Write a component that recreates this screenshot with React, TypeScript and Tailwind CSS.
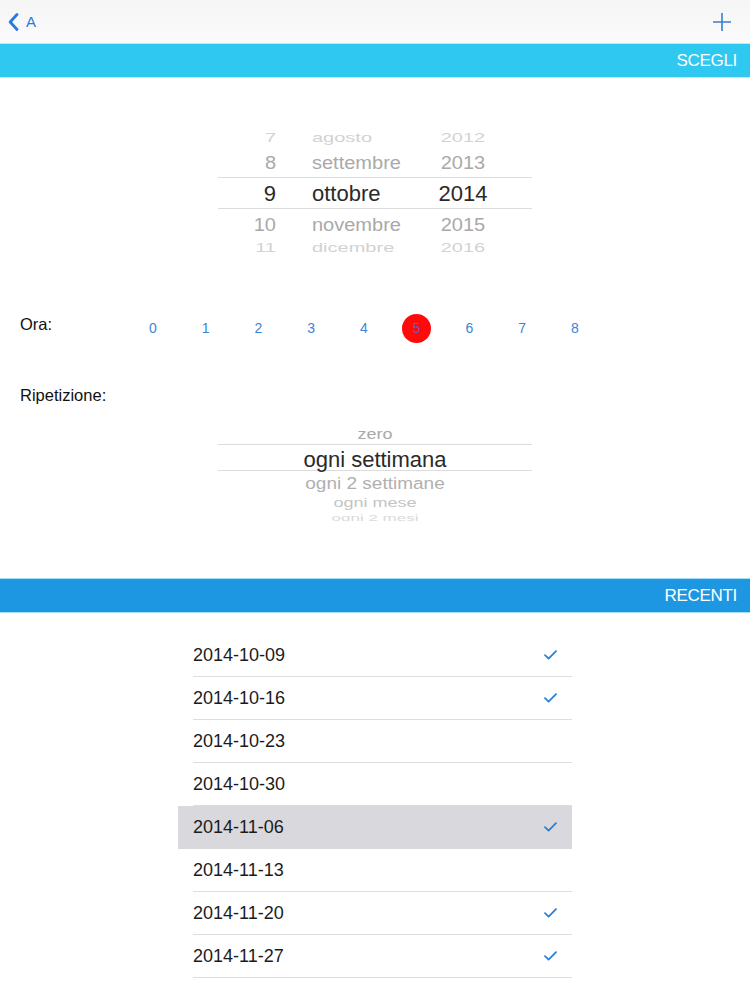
const FONT = { fontFamily: '"Liberation Sans", Arial, sans-serif' }

const DATE_ROWS = [
  { d: '7', m: 'agosto', y: '2012', h: 'h-[23px]', text: 'text-[20px] text-[#d2d2d2] scale-y-[0.62]' },
  { d: '8', m: 'settembre', y: '2013', h: 'h-[28px]', text: 'text-[20px] text-[#a9a9a9] scale-y-[0.88]' },
  { d: '9', m: 'ottobre', y: '2014', h: 'h-[32px] border-y border-[#dcdcdc]', text: 'text-[22px] text-[#2a2a2a]' },
  { d: '10', m: 'novembre', y: '2015', h: 'h-[31px]', text: 'text-[20px] text-[#a9a9a9] scale-y-[0.88]' },
  { d: '11', m: 'dicembre', y: '2016', h: 'h-[16px]', text: 'text-[20px] text-[#d2d2d2] scale-y-[0.62]' },
]

const REPEAT_ROWS = [
  { label: 'zero', h: 'h-[20px]', text: 'text-[18px] text-[#a9a9a9] scale-y-[0.85]' },
  { label: 'ogni settimana', h: 'h-[27px] border-y border-[#dcdcdc] pt-[4px]', text: 'text-[22px] text-[#2a2a2a]' },
  { label: 'ogni 2 settimane', h: 'h-[24px]', text: 'text-[19px] text-[#b0b0b0] scale-y-[0.9]' },
  { label: 'ogni mese', h: 'h-[16px]', text: 'text-[18px] text-[#c4c4c4] scale-y-[0.72]' },
  { label: 'ogni 2 mesi', h: 'h-[14px]', text: 'text-[17px] text-[#dadada] scale-y-[0.5]' },
]

const HOURS = [0, 1, 2, 3, 4, 5, 6, 7, 8]

const RECENT = [
  { date: '2014-10-09', done: true },
  { date: '2014-10-16', done: true },
  { date: '2014-10-23', done: false },
  { date: '2014-10-30', done: false },
  { date: '2014-11-06', done: true, selected: true },
  { date: '2014-11-13', done: false },
  { date: '2014-11-20', done: true },
  { date: '2014-11-27', done: true },
]

function SectionBar({ title, tone }: { title: string; tone: 'cyan' | 'blue' }) {
  const cls =
    tone === 'cyan'
      ? 'bg-[#2ec8f0] border-[#b5ecfb]'
      : 'bg-[#1e97e3] border-[#a6ddf8]'
  return (
    <div className={`flex h-[35px] items-center justify-end border-y pr-[13px] ${cls}`}>
      <span className="text-[17px] tracking-[-0.3px] text-white">{title}</span>
    </div>
  )
}

function Check() {
  return (
    <svg width="13" height="10" viewBox="0 0 13 10" fill="none">
      <polyline points="1,5.2 4.6,8.6 12,1.2" stroke="#2a80d8" strokeWidth="1.8" strokeLinecap="round" strokeLinejoin="round" />
    </svg>
  )
}

export default function App() {
  return (
    <div className="min-h-[1000px] w-[750px] bg-white" style={FONT}>
      {/* nav */}
      <div className="flex h-[43px] items-center justify-between bg-gradient-to-b from-[#f5f5f6] to-[#fbfbfb] pl-[8px] pr-[18px]">
        <div className="flex items-center gap-[7px] text-[#2a7ad9]">
          <svg width="11" height="18" viewBox="0 0 11 18" fill="none">
            <polyline points="9,1.5 2.2,9 9,16.5" stroke="#2a7ad9" strokeWidth="2.8" strokeLinecap="round" strokeLinejoin="round" />
          </svg>
          <span className="mt-[1px] text-[15px]">A</span>
        </div>
        <svg width="20" height="20" viewBox="0 0 20 20" fill="none">
          <path d="M10 1v18M1 10h18" stroke="#3a7fca" strokeWidth="1.6" />
        </svg>
      </div>

      <SectionBar title="SCEGLI" tone="cyan" />

      {/* date picker */}
      <div className="ml-[218px] mt-[48px] h-[128px] w-[314px] overflow-hidden">
        {DATE_ROWS.map((r) => (
          <div key={r.d} className={`flex items-center ${r.h}`}>
            <div className={`flex w-full items-center ${r.text}`}>
              <span className="w-[58px] text-right">{r.d}</span>
              <span className="ml-[36px] w-[100px]">{r.m}</span>
              <span className="w-[102px] text-center">{r.y}</span>
            </div>
          </div>
        ))}
      </div>

      {/* hour */}
      <div className="mt-[59px] flex h-[30px] items-center pl-[20px]">
        <span className="mb-[8px] w-[106.6px] text-[16.5px] text-[#111]">Ora:</span>
        {HOURS.map((h) => (
          <div key={h} className="flex w-[52.75px] items-center justify-center">
            {h === 5 ? (
              <span className="flex h-[29px] w-[29px] items-center justify-center rounded-full bg-[#ff0a0a] text-[14px] text-[#6e5ab4]">
                {h}
              </span>
            ) : (
              <span className="text-[14px] text-[#3a86d6]">{h}</span>
            )}
          </div>
        ))}
      </div>

      {/* repetition */}
      <div className="mt-[42px] flex h-[20px] items-center pl-[20px] text-[16.5px] text-[#111]">Ripetizione:</div>
      <div className="ml-[218px] mt-[19px] h-[97px] w-[314px] overflow-hidden">
        {REPEAT_ROWS.map((r) => (
          <div key={r.label} className={`flex items-center justify-center ${r.h}`}>
            <span className={`whitespace-nowrap leading-none ${r.text}`}>{r.label}</span>
          </div>
        ))}
      </div>

      <div className="mt-[57px]">
        <SectionBar title="RECENTI" tone="blue" />
      </div>

      {/* recent list */}
      <div className="ml-[178px] w-[394px] pt-[21px]">
        {RECENT.map((r) => (
          <div key={r.date} className={r.selected ? 'bg-[#d9d8dc]' : ''}>
            <div
              className={`ml-[15px] flex h-[43px] items-center justify-between border-b pr-[15px] ${
                r.selected ? 'border-transparent' : 'border-[#dedede]'
              }`}
            >
              <span className="text-[18px] text-[#1b1b1b]">{r.date}</span>
              {r.done && <Check />}
            </div>
          </div>
        ))}
      </div>
    </div>
  )
}
